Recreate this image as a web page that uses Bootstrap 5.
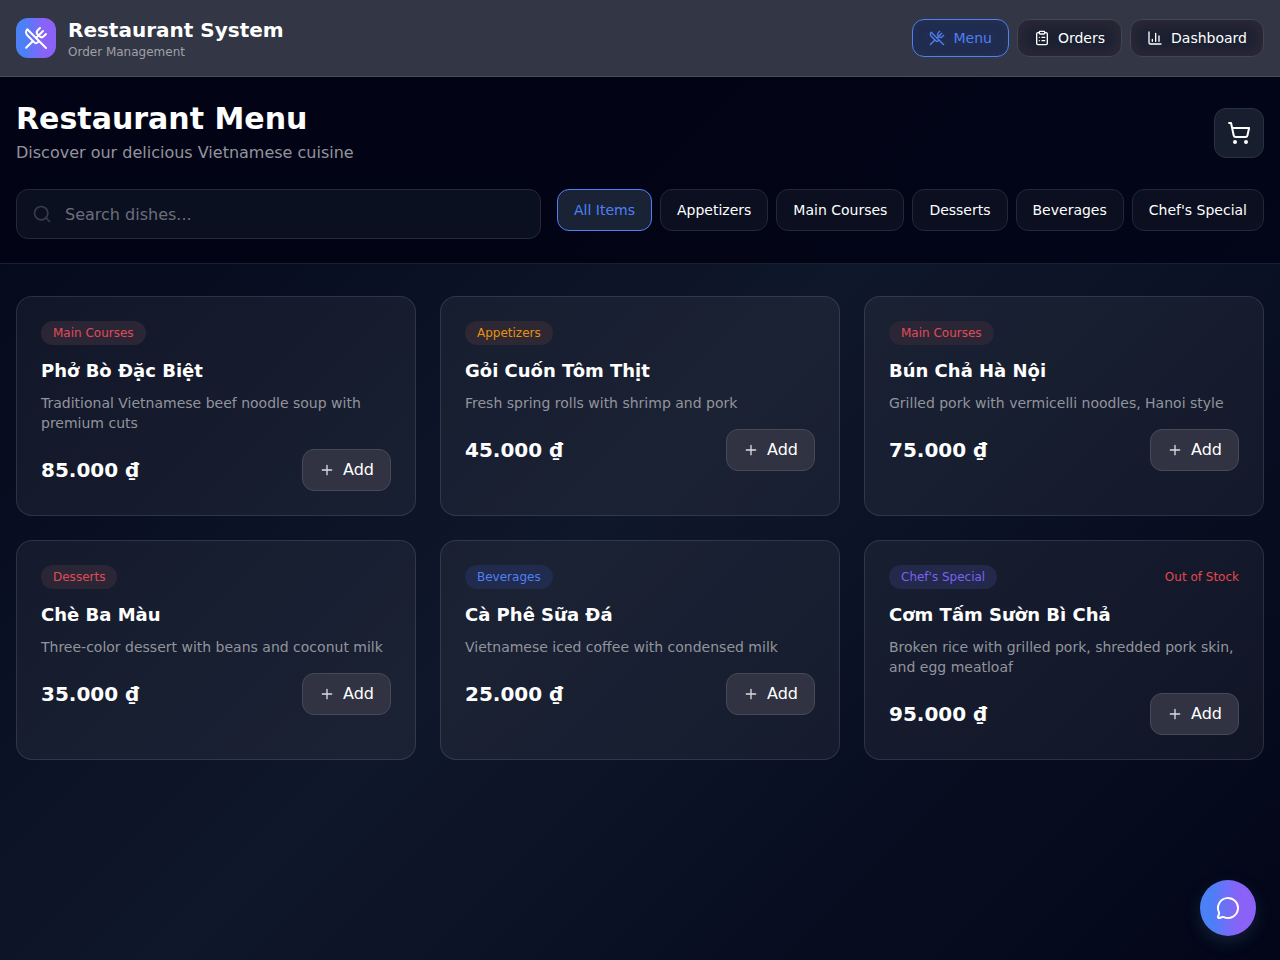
<!DOCTYPE html>
<html lang="en">
<head>
<meta charset="utf-8">
<meta name="viewport" content="width=device-width, initial-scale=1">
<title>Restaurant System</title>
<link rel="stylesheet" href="https://cdn.jsdelivr.net/npm/bootstrap@5.3.0/dist/css/bootstrap.min.css">
<style>
  :root { --accent: #4f7ff5; --violet: #8b5cf6; --rose: #e5484d; --muted: #92949d; }
  body {
    font: 16px/24px "DejaVu Sans", sans-serif;
    color: #fff;
    background: linear-gradient(135deg, #020618 0%, #0f172a 50%, #020618 100%) fixed;
  }
  svg { fill: none; stroke: currentColor; stroke-width: 2; stroke-linecap: round; stroke-linejoin: round; flex: none; }
  .i16 { width: 16px; height: 16px; }
  .i20 { width: 20px; height: 20px; }
  .i24 { width: 24px; height: 24px; }
  .topbar { background: #333644; border-bottom: 1px solid #4a4c59; }
  .accent-fill { background: linear-gradient(90deg, #4b80f7 20%, #8b62f8 70%); color: #fff; }
  .logo { width: 40px; height: 40px; border-radius: 12px; }
  .brand-name { font-size: 20px; line-height: 28px; font-weight: 700; }
  .tiny { font-size: 12px; line-height: 16px; }
  .soft { color: var(--muted); }
  .topbar .soft { color: #a0a1a9; }
  .btn { --bs-btn-border-radius: 12px; --bs-btn-color: #fff; --bs-btn-hover-color: #fff; --bs-btn-padding-x: 16px; --bs-btn-padding-y: 8px; line-height: 24px; }
  .nav-pill { font-size: 14px; line-height: 20px; background: #1b2031; border-color: #434652; box-shadow: inset 0 0 14px 5px #2d2936; }
  .nav-pill.current { color: var(--accent); background: #202c50; border-color: #5080f5; box-shadow: inset 0 0 10px #293150; }
  .hero { background: linear-gradient(135deg, #020416 50%, #030618); border-bottom: 1px solid #1b2030; }
  .hero h1 { font-size: 30px; line-height: 36px; font-weight: 700; }
  .cart { width: 50px; height: 50px; background: #171e2e; border-color: #2c313f; }
  .search-icon { left: 16px; color: #383b49; }
  .search .form-control {
    height: 50px; padding: 12px 16px 12px 48px; border-radius: 12px;
    background: #0b1021; border-color: #262838; color: #fff;
  }
  .search .form-control::placeholder { color: #6b6e79; opacity: 1; }
  .chip { font-size: 14px; line-height: 20px; --bs-btn-padding-y: 10px; background: #0b0f20; border-color: #252636; }
  .chip.current { color: var(--accent); background: #192335; border-color: #5080f5; }
  .menu { padding-top: 32px; }
  .dish { height: 100%; padding: 24px; border: 1px solid rgba(255,255,255,.11); border-radius: 16px; background: rgba(255,255,255,.05); }
  .tag { padding: 4px 12px; border-radius: 12px; }
  .tag-rose { color: #e04b58; background: #2b2635; }
  .tag-amber { color: #e4930f; background: #2d2833; }
  .tag-blue { color: #5080f5; background: #202b4d; }
  .tag-violet { color: #7b62f0; background: #22294a; }
  .stock { color: var(--rose); }
  .dish h2 { font-size: 18px; line-height: 28px; font-weight: 700; }
  .desc { font-size: 14px; line-height: 20px; }
  .price { font-size: 20px; line-height: 28px; font-weight: 700; }
  .add { background: #313343; border-color: #464957; }
  .add svg { color: #dcdde2; }
  .chat { width: 56px; height: 56px; right: 24px; bottom: 24px; box-shadow: 0 6px 16px rgba(60,90,130,.3); }
</style>
</head>
<body class="min-vh-100">
<svg class="d-none" aria-hidden="true">
  <symbol id="utensils" viewBox="0 0 24 24"><path d="m16 2-2.3 2.3a3 3 0 0 0 0 4.2l1.8 1.8a3 3 0 0 0 4.2 0L22 8"/><path d="M15 15 3.3 3.3a4.2 4.2 0 0 0 0 6l7.3 7.3c.7.7 2 .7 2.8 0L15 15Zm0 0 7 7"/><path d="m2.1 21.8 6.4-6.3"/><path d="m19 5-7 7"/></symbol>
  <symbol id="plus" viewBox="0 0 24 24"><path d="M5 12h14M12 5v14"/></symbol>
</svg>

<header class="topbar p-3 d-flex flex-wrap align-items-center justify-content-between gap-2">
  <div class="d-flex align-items-center">
    <div class="logo accent-fill d-flex align-items-center justify-content-center me-2"><svg class="i24"><use href="#utensils"/></svg></div>
    <div class="ms-1">
      <div class="brand-name">Restaurant System</div>
      <div class="tiny soft">Order Management</div>
    </div>
  </div>
  <nav class="d-flex flex-wrap gap-2">
    <button type="button" class="btn nav-pill current d-flex align-items-center gap-2" aria-current="page"><svg class="i16"><use href="#utensils"/></svg>Menu</button>
    <button type="button" class="btn nav-pill d-flex align-items-center gap-2"><svg class="i16" viewBox="0 0 24 24"><rect width="8" height="4" x="8" y="2" rx="1"/><path d="M16 4h2a2 2 0 0 1 2 2v14a2 2 0 0 1-2 2H6a2 2 0 0 1-2-2V6a2 2 0 0 1 2-2h2M12 11h4M12 16h4M8 11h.01M8 16h.01"/></svg>Orders</button>
    <button type="button" class="btn nav-pill d-flex align-items-center gap-2"><svg class="i16" viewBox="0 0 24 24"><path d="M3 3v16a2 2 0 0 0 2 2h16M18 17V9M13 17V5M8 17v-3"/></svg>Dashboard</button>
  </nav>
</header>

<section class="hero px-3 py-4">
  <div class="d-flex align-items-center justify-content-between mb-4">
    <div>
      <h1 class="mb-1">Restaurant Menu</h1>
      <p class="soft mb-0">Discover our delicious Vietnamese cuisine</p>
    </div>
    <button type="button" class="btn cart p-0 d-flex align-items-center justify-content-center" aria-label="Cart"><svg class="i24" viewBox="0 0 24 24"><circle cx="8" cy="21" r="1"/><circle cx="19" cy="21" r="1"/><path d="M2.05 2.05h2l2.66 12.42a2 2 0 0 0 2 1.58h9.78a2 2 0 0 0 1.95-1.57l1.65-7.43H5.12"/></svg></button>
  </div>
  <div class="d-flex flex-column flex-lg-row gap-3">
    <label class="search position-relative flex-grow-1">
      <svg class="i20 search-icon position-absolute top-50 translate-middle-y" viewBox="0 0 24 24"><circle cx="11" cy="11" r="8"/><path d="m21 21-4.3-4.3"/></svg>
      <input type="text" class="form-control" placeholder="Search dishes..." aria-label="Search dishes">
    </label>
    <div class="d-flex flex-wrap align-items-start gap-2">
      <button type="button" class="btn chip current">All Items</button>
      <button type="button" class="btn chip">Appetizers</button>
      <button type="button" class="btn chip">Main Courses</button>
      <button type="button" class="btn chip">Desserts</button>
      <button type="button" class="btn chip">Beverages</button>
      <button type="button" class="btn chip">Chef's Special</button>
    </div>
  </div>
</section>

<main class="menu container-fluid px-3 pb-4">
  <div class="row g-4">
    <div class="col-12 col-md-6 col-lg-4"><article class="dish">
      <div class="d-flex align-items-center justify-content-between tiny"><span class="tag tag-rose">Main Courses</span></div>
      <h2 class="mt-2 pt-1 mb-2">Phở Bò Đặc Biệt</h2>
      <p class="desc soft mb-3">Traditional Vietnamese beef noodle soup with premium cuts</p>
      <div class="d-flex align-items-center justify-content-between"><span class="price">85.000 ₫</span><button type="button" class="btn add d-flex align-items-center gap-2"><svg class="i16"><use href="#plus"/></svg>Add</button></div>
    </article></div>
    <div class="col-12 col-md-6 col-lg-4"><article class="dish">
      <div class="d-flex align-items-center justify-content-between tiny"><span class="tag tag-amber">Appetizers</span></div>
      <h2 class="mt-2 pt-1 mb-2">Gỏi Cuốn Tôm Thịt</h2>
      <p class="desc soft mb-3">Fresh spring rolls with shrimp and pork</p>
      <div class="d-flex align-items-center justify-content-between"><span class="price">45.000 ₫</span><button type="button" class="btn add d-flex align-items-center gap-2"><svg class="i16"><use href="#plus"/></svg>Add</button></div>
    </article></div>
    <div class="col-12 col-md-6 col-lg-4"><article class="dish">
      <div class="d-flex align-items-center justify-content-between tiny"><span class="tag tag-rose">Main Courses</span></div>
      <h2 class="mt-2 pt-1 mb-2">Bún Chả Hà Nội</h2>
      <p class="desc soft mb-3">Grilled pork with vermicelli noodles, Hanoi style</p>
      <div class="d-flex align-items-center justify-content-between"><span class="price">75.000 ₫</span><button type="button" class="btn add d-flex align-items-center gap-2"><svg class="i16"><use href="#plus"/></svg>Add</button></div>
    </article></div>
    <div class="col-12 col-md-6 col-lg-4"><article class="dish">
      <div class="d-flex align-items-center justify-content-between tiny"><span class="tag tag-rose">Desserts</span></div>
      <h2 class="mt-2 pt-1 mb-2">Chè Ba Màu</h2>
      <p class="desc soft mb-3">Three-color dessert with beans and coconut milk</p>
      <div class="d-flex align-items-center justify-content-between"><span class="price">35.000 ₫</span><button type="button" class="btn add d-flex align-items-center gap-2"><svg class="i16"><use href="#plus"/></svg>Add</button></div>
    </article></div>
    <div class="col-12 col-md-6 col-lg-4"><article class="dish">
      <div class="d-flex align-items-center justify-content-between tiny"><span class="tag tag-blue">Beverages</span></div>
      <h2 class="mt-2 pt-1 mb-2">Cà Phê Sữa Đá</h2>
      <p class="desc soft mb-3">Vietnamese iced coffee with condensed milk</p>
      <div class="d-flex align-items-center justify-content-between"><span class="price">25.000 ₫</span><button type="button" class="btn add d-flex align-items-center gap-2"><svg class="i16"><use href="#plus"/></svg>Add</button></div>
    </article></div>
    <div class="col-12 col-md-6 col-lg-4"><article class="dish">
      <div class="d-flex align-items-center justify-content-between tiny"><span class="tag tag-violet">Chef's Special</span><span class="stock">Out of Stock</span></div>
      <h2 class="mt-2 pt-1 mb-2">Cơm Tấm Sườn Bì Chả</h2>
      <p class="desc soft mb-3">Broken rice with grilled pork, shredded pork skin, and egg meatloaf</p>
      <div class="d-flex align-items-center justify-content-between"><span class="price">95.000 ₫</span><button type="button" class="btn add d-flex align-items-center gap-2"><svg class="i16"><use href="#plus"/></svg>Add</button></div>
    </article></div>
  </div>
</main>

<button type="button" class="chat accent-fill position-fixed rounded-circle border-0 p-0 d-flex align-items-center justify-content-center" aria-label="Chat"><svg class="i24" viewBox="0 0 24 24"><path d="M2.992 16.342a2 2 0 0 1 .094 1.167l-1.065 3.29a1 1 0 0 0 1.236 1.168l3.413-.998a2 2 0 0 1 1.099.092 10 10 0 1 0-4.777-4.719"/></svg></button>
<script src="https://cdn.jsdelivr.net/npm/bootstrap@5.3.0/dist/js/bootstrap.bundle.min.js"></script>
</body>
</html>
